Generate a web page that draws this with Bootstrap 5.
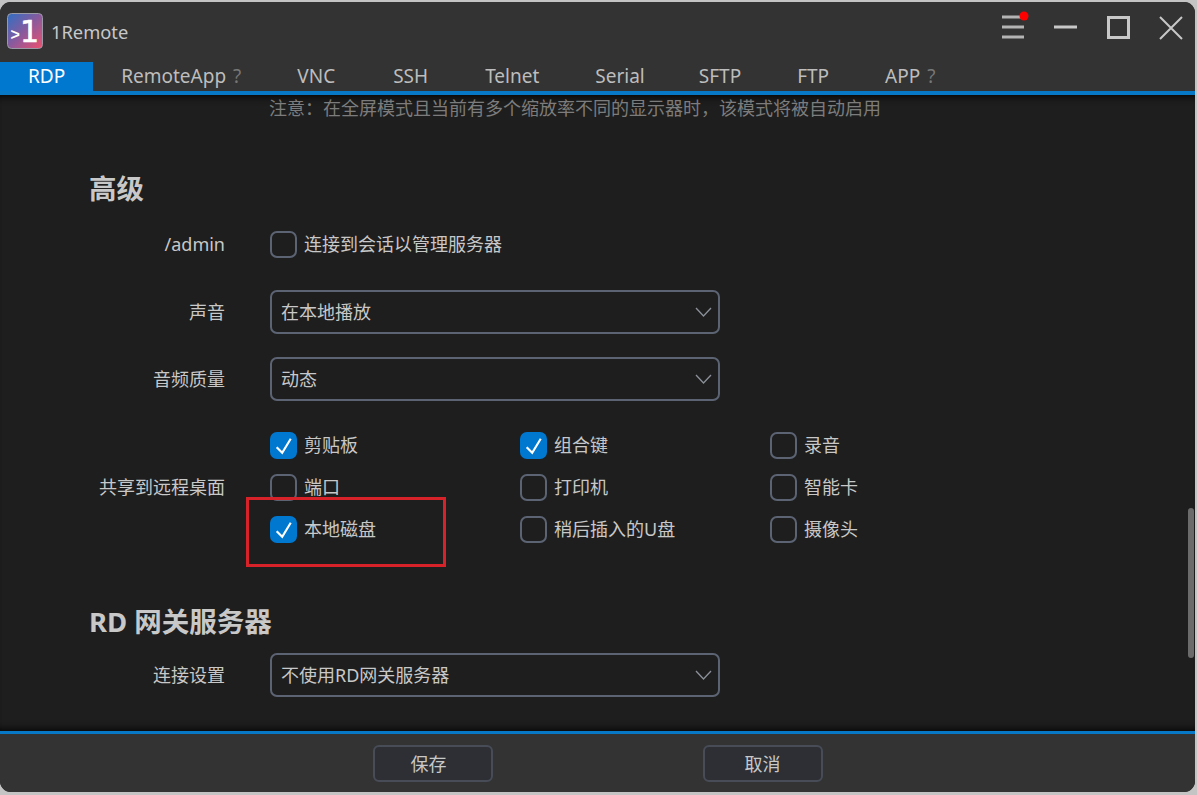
<!DOCTYPE html>
<html lang="zh">
<head>
<meta charset="utf-8">
<title>1Remote</title>
<link href="https://cdn.jsdelivr.net/npm/bootstrap@5.3.0/dist/css/bootstrap.min.css" rel="stylesheet">
<style>
html,body{height:100%;}
body{background:#c4c4c4;font-family:"Noto Sans","Noto Sans CJK SC",sans-serif;font-size:18px;color:#c8c8c8;overflow:hidden;}
.appwin{height:790px;width:1195px;margin-top:2px;border-radius:11px;overflow:hidden;background:#1e1e1e;position:relative;}
.titlebar{height:60px;background:#333;padding:0 13px 0 7px;}
.apptitle{font-size:18.3px;color:#c8c8c8;margin-left:8px;}
.applogo{display:block;margin-top:-2px;}
.winctl{display:block;align-self:flex-start;margin-top:12px;overflow:visible;}
.tabrow{height:33px;background:#333;border-bottom:4px solid #0678c6;}
.tabrow .nav-link{height:29px;padding:0 28px;font-size:19px;line-height:29px;color:#bdbdbd;border-radius:0;background:transparent;}
.tabrow .nav-link.active{background:#0078d0;color:#fff;}
.tabrow .nav-link.tab-vnc{padding-right:30px;}
.tabrow .nav-link.tab-ssh{padding-right:29px;}
.tabrow .nav-link.tab-serial{padding-right:26px;}
.hint{color:#777;margin-left:7px;}
.mainpane{flex:1 1 auto;min-height:0;background:#1e1e1e;position:relative;overflow:hidden;box-shadow:inset 0 9px 8px -8px #000,inset 0 -9px 8px -8px #000;}
.notice{color:#7c7c7c;padding-left:269px;line-height:26px;padding-top:0;}
.sectitle{font-size:27.5px;font-weight:700;color:#c8c8c8;padding-left:89px;line-height:36px;margin:0;}
.fieldlabel{width:225px;text-align:right;margin-right:45px;flex:none;}
.form-select.darkselect{width:450px;height:44px;background-color:#1e1e1e;border:2px solid #5c6474;border-radius:7px;color:#c8c8c8;font-size:18px;padding:0 30px 0 9px;background-size:17px 12px;background-position:right 6px center;
background-image:url("data:image/svg+xml,%3Csvg xmlns='http://www.w3.org/2000/svg' viewBox='0 0 17 12'%3E%3Cpath d='M1 2l7.5 8L16 2' fill='none' stroke='%238a8f99' stroke-width='1.3'/%3E%3C/svg%3E");}
.checkrow{height:27px;display:flex;align-items:center;}
.form-check-input.darkcheck{width:27px;height:27px;margin:0 7px 0 0;background-color:#1e1e1e;border:2px solid #5c6474;border-radius:7px;flex:none;}
.form-check-input.darkcheck:checked{background-color:#0078d0;border-color:#0078d0;background-size:100%;
background-image:url("data:image/svg+xml,%3Csvg xmlns='http://www.w3.org/2000/svg' viewBox='0 0 27 27'%3E%3Cpath d='M5.5 15.5L12 22L22 5.5' fill='none' stroke='%23fff' stroke-width='2.5'/%3E%3C/svg%3E");}
.checklabel{color:#c8c8c8;}
.sharegrid{display:grid;grid-template-columns:repeat(3,250px);row-gap:15px;}
.redmark{position:absolute;left:246px;top:402px;width:200px;height:70px;border:3px solid #d8222a;pointer-events:none;}
.scrollthumb{position:absolute;left:1188px;top:413px;width:6px;height:150px;border-radius:3px;background:#6b6b6b;}
.footerbar{height:61px;background:#333;border-top:3px solid #0678c6;padding-top:11px;}
.btn.darkbtn{height:37px;width:120px;padding:0;background:#2d2f35;border:2px solid #474c57;border-radius:6px;color:#c8c8c8;font-size:18px;line-height:35px;}
.btn.darkbtn.savebtn{padding-right:8px;}
.footgap{gap:210px;}
.row-admin{margin-top:24px;height:27px;}
.row-sound{margin-top:32px;}
.row-audio{margin-top:23px;}
.row-share{margin-top:31px;}
.sec-adv{margin-top:50px;}
.sec-rd{margin-top:61px;}
.row-gateway{margin-top:13px;}
</style>
</head>
<body>
<div class="appwin d-flex flex-column">
  <div class="titlebar d-flex align-items-center flex-none">
    <svg width="36" height="36" viewBox="0 0 36 36" class="applogo">
      <defs><linearGradient id="lg" x1="0" y1="0" x2="1" y2="1"><stop offset="0" stop-color="#2f6fc4"/><stop offset="0.5" stop-color="#8a5a9c"/><stop offset="1" stop-color="#f0506e"/></linearGradient></defs>
      <rect x="0.5" y="0.5" width="35" height="35" rx="4" fill="url(#lg)" stroke="#9a9aa6"/>
      <text x="3.5" y="27" fill="#fff" font-family="Liberation Sans" font-size="16" font-weight="700">&gt;</text>
      <text x="13" y="29" fill="#fff" font-family="DejaVu Sans" font-size="30" stroke="#fff" stroke-width="0.6">1</text>
    </svg>
    <span class="apptitle">1Remote</span>
    <svg width="182" height="30" viewBox="0 0 182 30" class="winctl ms-auto" fill="none" stroke="#b4b4b4" stroke-width="3">
      <path d="M2 3h22M2 13h22M2 23h22"/>
      <circle cx="24" cy="2" r="4.5" fill="#f00" stroke="none"/>
      <path d="M54 13h23" stroke="#c8c8c8"/>
      <rect x="108.5" y="3.5" width="20" height="20" stroke="#c8c8c8"/>
      <path d="M160 3l22 22M182 3l-22 22" stroke="#c8c8c8" stroke-width="2"/>
    </svg>
  </div>
  <div class="tabrow flex-none">
    <ul class="nav">
      <li class="nav-item"><a class="nav-link active" href="#">RDP</a></li>
      <li class="nav-item"><a class="nav-link" href="#">RemoteApp<span class="hint">?</span></a></li>
      <li class="nav-item"><a class="nav-link tab-vnc" href="#">VNC</a></li>
      <li class="nav-item"><a class="nav-link tab-ssh" href="#">SSH</a></li>
      <li class="nav-item"><a class="nav-link" href="#">Telnet</a></li>
      <li class="nav-item"><a class="nav-link tab-serial" href="#">Serial</a></li>
      <li class="nav-item"><a class="nav-link" href="#">SFTP</a></li>
      <li class="nav-item"><a class="nav-link" href="#">FTP</a></li>
      <li class="nav-item"><a class="nav-link" href="#">APP<span class="hint">?</span></a></li>
    </ul>
  </div>
  <div class="mainpane">
    <div class="notice">注意：在全屏模式且当前有多个缩放率不同的显示器时，该模式将被自动启用</div>
    <h2 class="sectitle sec-adv">高级</h2>
    <div class="d-flex align-items-center row-admin">
      <div class="fieldlabel">/admin</div>
      <div class="checkrow"><input class="form-check-input darkcheck" type="checkbox"><span class="checklabel">连接到会话以管理服务器</span></div>
    </div>
    <div class="d-flex align-items-center row-sound">
      <div class="fieldlabel">声音</div>
      <select class="form-select darkselect"><option>在本地播放</option></select>
    </div>
    <div class="d-flex align-items-center row-audio">
      <div class="fieldlabel">音频质量</div>
      <select class="form-select darkselect"><option>动态</option></select>
    </div>
    <div class="d-flex align-items-center row-share">
      <div class="fieldlabel">共享到远程桌面</div>
      <div class="sharegrid">
        <div class="checkrow"><input class="form-check-input darkcheck" type="checkbox" checked><span class="checklabel">剪贴板</span></div>
        <div class="checkrow"><input class="form-check-input darkcheck" type="checkbox" checked><span class="checklabel">组合键</span></div>
        <div class="checkrow"><input class="form-check-input darkcheck" type="checkbox"><span class="checklabel">录音</span></div>
        <div class="checkrow"><input class="form-check-input darkcheck" type="checkbox"><span class="checklabel">端口</span></div>
        <div class="checkrow"><input class="form-check-input darkcheck" type="checkbox"><span class="checklabel">打印机</span></div>
        <div class="checkrow"><input class="form-check-input darkcheck" type="checkbox"><span class="checklabel">智能卡</span></div>
        <div class="checkrow"><input class="form-check-input darkcheck" type="checkbox" checked><span class="checklabel">本地磁盘</span></div>
        <div class="checkrow"><input class="form-check-input darkcheck" type="checkbox"><span class="checklabel">稍后插入的U盘</span></div>
        <div class="checkrow"><input class="form-check-input darkcheck" type="checkbox"><span class="checklabel">摄像头</span></div>
      </div>
    </div>
    <h2 class="sectitle sec-rd">RD 网关服务器</h2>
    <div class="d-flex align-items-center row-gateway">
      <div class="fieldlabel">连接设置</div>
      <select class="form-select darkselect"><option>不使用RD网关服务器</option></select>
    </div>
    <div class="redmark"></div>
    <div class="scrollthumb"></div>
  </div>
  <div class="footerbar flex-none d-flex justify-content-center footgap">
    <button class="btn darkbtn savebtn" type="button">保存</button>
    <button class="btn darkbtn" type="button">取消</button>
  </div>
</div>
<script src="https://cdn.jsdelivr.net/npm/bootstrap@5.3.0/dist/js/bootstrap.bundle.min.js"></script>
</body>
</html>
